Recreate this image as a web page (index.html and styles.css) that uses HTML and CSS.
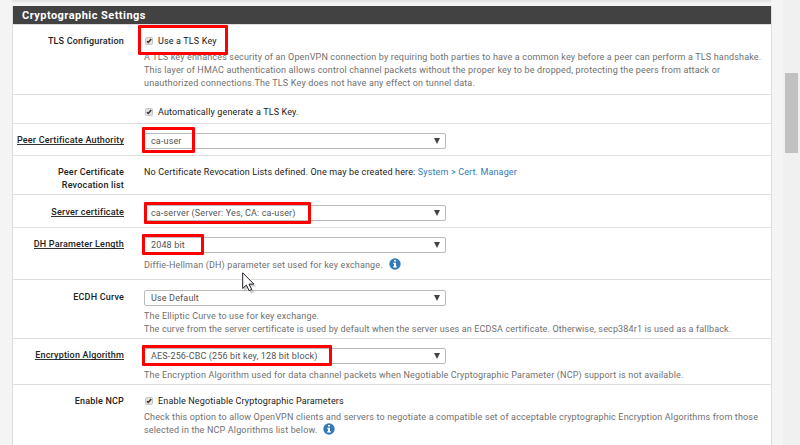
FILE: index.html
```html
<!DOCTYPE html>
<html lang="en">
<head>
<meta charset="utf-8">
<title>Cryptographic Settings</title>
<link rel="stylesheet" href="styles.css">
</head>
<body>
<svg class="defs" width="0" height="0">
  <symbol id="check" viewBox="0 0 8 8"><rect x=".5" y=".5" width="7" height="7" rx="1" fill="#e2e2e2" stroke="#c4c4c4"/><path d="M2 4.200 3.300 5.500 6.200 2" fill="none" stroke="#333" stroke-width="1.500"/></symbol>
  <symbol id="info" viewBox="0 0 12 12"><circle cx="6" cy="6" r="5.7" fill="#337ab7"/><path d="M5 2h2v1.600H5zM4.300 4.800H7v3.400h.8v1.300H4.200V8.200H5V6h-.7z" fill="#fff"/></symbol>
</svg>
<div class="strip"></div>
<main class="panel">
  <h2 class="title"><span>Cryptographic Settings</span></h2>
  <section class="row tls">
    <div class="label"><span>TLS Configuration</span></div>
    <div class="field">
      <div class="option"><svg class="check"><use href="#check"/></svg><span>Use a TLS Key</span></div>
      <p class="help">A TLS key enhances security of an OpenVPN connection by requiring both parties to have a common key before a peer can perform a TLS handshake.<br>This layer of HMAC authentication allows control channel packets without the proper key to be dropped, protecting the peers from attack or<br><span class="loose">unauthorized connections.The TLS Key does not have any effect on tunnel data.</span></p>
    </div>
  </section>
  <section class="row auto">
    <div class="label"></div>
    <div class="field"><div class="option"><svg class="check"><use href="#check"/></svg><span>Automatically generate a TLS Key.</span></div></div>
  </section>
  <section class="row ca">
    <div class="label"><span class="req">Peer Certificate Authority</span></div>
    <div class="field"><div class="select"><span>ca-user</span><i class="arrow"></i></div></div>
  </section>
  <section class="row crl">
    <div class="label"><span>Peer Certificate</span><br><span>Revocation list</span></div>
    <div class="field"><p class="plain">No Certificate Revocation Lists defined. One may be created here: <a>System &gt; Cert. Manager</a></p></div>
  </section>
  <section class="row cert">
    <div class="label"><span class="req">Server certificate</span></div>
    <div class="field"><div class="select"><span>ca-server (Server: Yes, CA: ca-user)</span><i class="arrow"></i></div></div>
  </section>
  <section class="row dh">
    <div class="label"><span class="req">DH Parameter Length</span></div>
    <div class="field"><div class="select"><span>2048 bit</span><i class="arrow"></i></div>
      <p class="help">Diffie-Hellman (DH) parameter set used for key exchange.<svg class="info"><use href="#info"/></svg></p></div>
  </section>
  <section class="row ecdh">
    <div class="label"><span>ECDH Curve</span></div>
    <div class="field"><div class="select"><span>Use Default</span><i class="arrow"></i></div>
      <p class="help">The Elliptic Curve to use for key exchange.<br><span class="tight">The curve from the server certificate is used by default when the server uses an ECDSA certificate. Otherwise, secp384r1 is used as a fallback.</span></p></div>
  </section>
  <section class="row enc">
    <div class="label"><span class="req">Encryption Algorithm</span></div>
    <div class="field"><div class="select"><span>AES-256-CBC (256 bit key, 128 bit block)</span><i class="arrow"></i></div>
      <p class="help">The Encryption Algorithm used for data channel packets when Negotiable Cryptographic Parameter (NCP) support is not available.</p></div>
  </section>
  <section class="row ncp">
    <div class="label"><span>Enable NCP</span></div>
    <div class="field">
      <div class="option"><svg class="check"><use href="#check"/></svg><span>Enable Negotiable Cryptographic Parameters</span></div>
      <p class="help">Check this option to allow OpenVPN clients and servers to negotiate a compatible set of acceptable cryptographic Encryption Algorithms from those<br>selected in the NCP Algorithms list below.<svg class="info"><use href="#info"/></svg></p>
    </div>
  </section>
</main>
<aside class="scrollbar"><div class="thumb"></div></aside>
<div class="mark m1"></div><div class="mark m2"></div><div class="mark m3"></div><div class="mark m4"></div><div class="mark m5"></div>
<svg class="cursor" viewBox="0 0 16 22"><path d="M2 2.500v17l4-3.700 3 6 3-1.500-3-5.800h5.500z" fill="#777" opacity=".35"/><path d="M.7.8v15.700l3.700-3.400 2.700 5.600 2.600-1.300-2.700-5.300h4.900z" fill="#fff" stroke="#1d1d2b"/></svg>
</body>
</html>
```
FILE: styles.css
```css
* { box-sizing: border-box; }
body { margin: 0; width: 800px; height: 445px; overflow: hidden; position: relative; display: grid; grid-template: 6px 1fr / 12px 760px 11px 17px; background: #f4f4f4; font: 9px/13px Roboto, sans-serif; color: #212121; }
.defs { position: absolute; }
.strip { grid-area: 1 / 2; height: 3px; margin-right: 1px; background: linear-gradient(#e0e0e0, #f1f1f1); }
.panel { grid-area: 2 / 2; background: #fff; border: solid #ddd; border-width: 0 1px; height: 439px; overflow: hidden; }
.title { margin: 0 0 0 -1px; height: 19px; padding-left: 10px; background: #424242; border-bottom: 1px solid #ddd; color: #fff; font-size: 11px; line-height: 19px; font-weight: 700; letter-spacing: .46px; }
.row { display: grid; grid-template-columns: 111px 1fr; column-gap: 20px; padding-top: 9px; border-bottom: 1px solid #ddd; white-space: nowrap; }
.label { text-align: right; font-weight: 500; letter-spacing: .19px; padding-top: 1px; }
.req { display: inline-block; height: 11px; border-bottom: 1px solid #333; }
.tls { height: 70px; } .auto { height: 29px; } .ca { height: 32px; } .crl { height: 39px; }
.cert { height: 33px; padding-top: 10px; } .dh { height: 52px; } .ecdh { height: 59px; padding-top: 10px; } .enc { height: 46px; } .ncp { height: 70px; border: 0; }
.option { display: flex; align-items: center; gap: 5px; height: 13px; margin-top: 1px; padding-left: 1px; letter-spacing: .15px; }
.auto .option { margin-top: 2px; }
.check { width: 8px; height: 8px; margin-top: -1px; }
.help, .plain { margin: 0; color: #707070; letter-spacing: .158px; }
.help { margin-top: 6px; }
.ecdh .help { margin-top: 4px; }
.enc .help { margin-top: 5px; }
.option + .help { margin-top: 3px; }
.loose { letter-spacing: .175px; }
.tight { letter-spacing: .143px; }
.plain { color: #212121; padding-top: 1px; letter-spacing: .145px; }
a { color: #337ab7; }
.select { width: 302px; height: 16px; border: 1px solid #bbb; border-radius: 2px; display: flex; align-items: center; justify-content: space-between; padding: 1px 5px 0 6px; color: #555; letter-spacing: .15px; }
.arrow { border: 3px solid transparent; border-top: 6px solid #444; border-bottom: 0; margin-top: -2px; }
.info { width: 12px; height: 12px; margin: -3px 0 -1px 6px; vertical-align: -1px; }
.scrollbar { grid-area: 1 / 4 / 3; background: #f0f0f0; padding: 73px 2px 0; }
.thumb { height: 80px; background: #c1c1c1; }
.mark { position: absolute; border: 3px solid #f00; border-radius: 1px; }
.m1 { left: 138px; top: 25px; width: 90px; height: 30px; }
.m2 { left: 142px; top: 127px; width: 53px; height: 26px; }
.m3 { left: 144px; top: 202px; width: 167px; height: 22px; }
.m4 { left: 142px; top: 234px; width: 62px; height: 21px; }
.m5 { left: 142px; top: 345px; width: 190px; height: 21px; }
.cursor { position: absolute; left: 242px; top: 272px; width: 16px; height: 22px; }
```
